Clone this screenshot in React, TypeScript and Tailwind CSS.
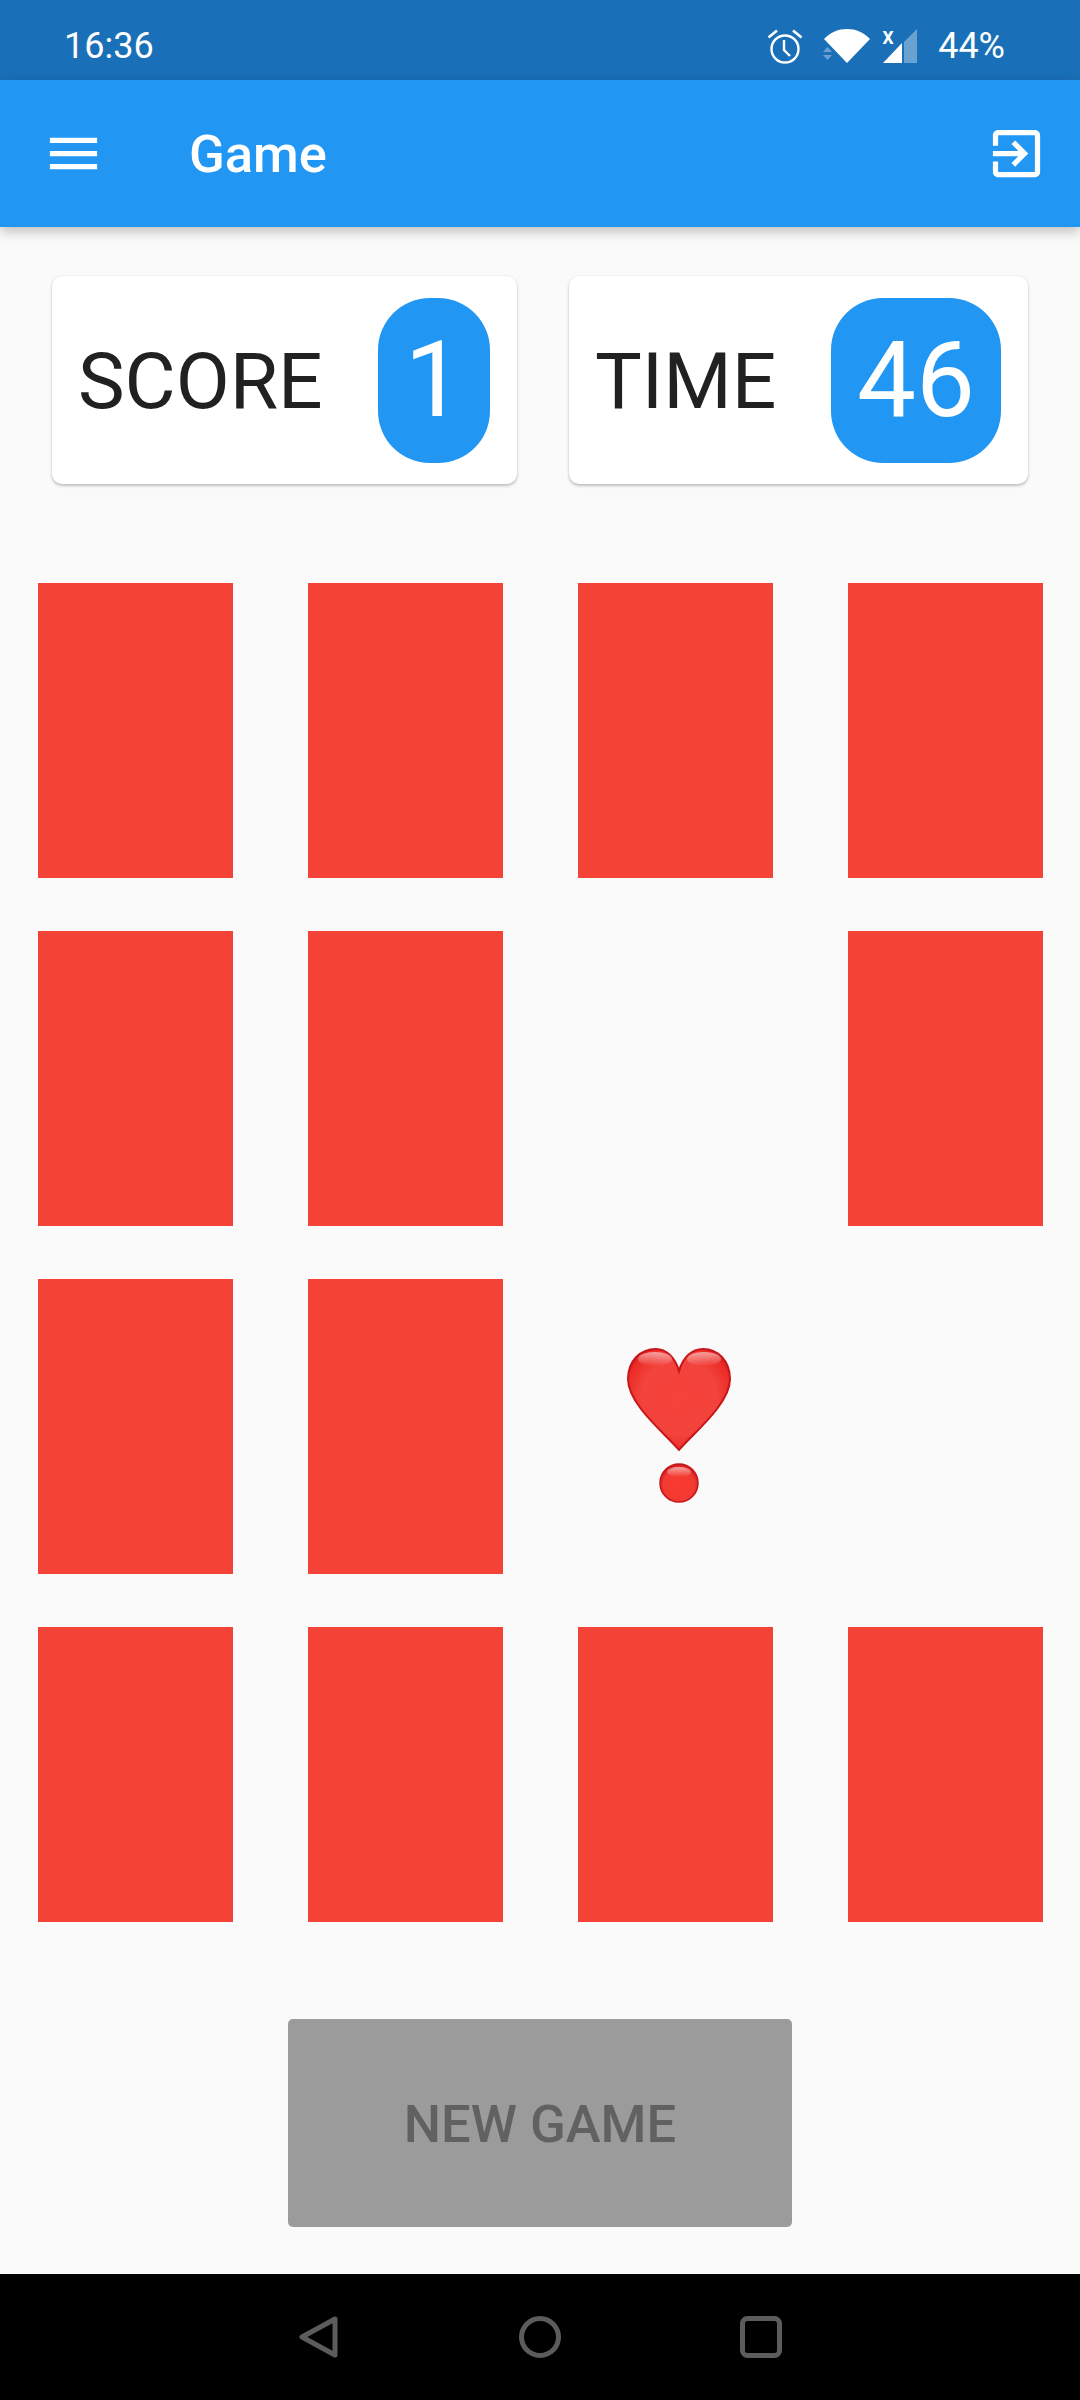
const ROBOTO = "font-['Roboto',sans-serif]";

// null = card already turned over
const cards: (string | null)[] = [
  "a", "b", "c", "d",
  "e", "f", null, "g",
  "h", "i", "heart", null,
  "j", "k", "l", "m",
];

function HeartEmoji() {
  return (
    <svg width="108" height="160" viewBox="0 0 108 160">
      <defs>
        <radialGradient id="heartFill" cx="50%" cy="48%" r="62%">
          <stop offset="0%" stopColor="#f6423a" />
          <stop offset="60%" stopColor="#f2433c" />
          <stop offset="85%" stopColor="#ec2c28" />
          <stop offset="100%" stopColor="#c9141a" />
        </radialGradient>
        <linearGradient id="heartShine" x1="0" y1="0" x2="0" y2="1">
          <stop offset="0%" stopColor="#ffffff" stopOpacity="0.55" />
          <stop offset="100%" stopColor="#ffffff" stopOpacity="0" />
        </linearGradient>
        <radialGradient id="dotFill" cx="50%" cy="55%" r="55%">
          <stop offset="0%" stopColor="#fb3a30" />
          <stop offset="75%" stopColor="#f03a32" />
          <stop offset="100%" stopColor="#c9181a" />
        </radialGradient>
      </defs>
      <path
        d="M54 103 C42 88 3 58 3 32 C3 14 15 2 31 2 C41 2 50 10 54 24 C58 10 67 2 78 2 C93 2 105 14 105 32 C105 58 66 88 54 103 Z"
        fill="url(#heartFill)"
        stroke="#c8151a"
        strokeWidth="2"
      />
      <ellipse cx="30" cy="12" rx="17" ry="7" fill="url(#heartShine)" />
      <ellipse cx="79" cy="12" rx="17" ry="7" fill="url(#heartShine)" />
      <circle cx="54" cy="136" r="19" fill="url(#dotFill)" stroke="#c8151a" strokeWidth="1.5" />
      <ellipse cx="54" cy="125" rx="12" ry="5" fill="url(#heartShine)" />
    </svg>
  );
}

function ScoreCard({
  label,
  value,
  cardWidth,
  pillWidth,
}: {
  label: string;
  value: string;
  cardWidth: string;
  pillWidth: string;
}) {
  return (
    <div
      className={`${cardWidth} h-[208px] flex items-center justify-between pl-[26px] pr-[27px] bg-white rounded-[10px] shadow-[0_2px_3px_rgba(0,0,0,0.22),0_0_2px_rgba(0,0,0,0.1)]`}
    >
      <span className="text-[78.5px] leading-none text-[#212121] pt-[2px]">{label}</span>
      <div
        className={`${pillWidth} h-[165px] flex items-center justify-center rounded-[52px] bg-[#2196f3] text-white text-[105px] leading-none`}
      >
        {value}
      </div>
    </div>
  );
}

export default function App() {
  return (
    <div className={`w-[1080px] h-[2400px] flex flex-col bg-[#fafafa] ${ROBOTO}`}>
      {/* Status bar */}
      <div className="h-[80px] flex items-center justify-between pt-[12px] pl-[64px] pr-[75px] bg-[#1a70b8] text-white text-[36px] leading-none">
        <span>16:36</span>
        <div className="flex items-center">
          <svg width="36" height="36" viewBox="0 0 36 36" fill="none" stroke="white" className="mr-[20px]">
            <circle cx="18" cy="21" r="13.5" strokeWidth="2.4" />
            <path d="M17 12v10l6 6" strokeWidth="2.4" />
            <path d="M1.5 9.5 10 2.5M34.5 9.5 26 2.5" strokeWidth="2.6" />
          </svg>
          <svg width="48" height="36" viewBox="0 0 48 36" fill="white" className="mr-[11px]">
            <path d="M24 35 1 11 C8 4 15 1 24 1 C33 1 40 4 47 11 Z" />
            <path d="M0 24 4.5 19 9 24Z M0 27 9 27 4.5 32Z" fill="#6f9fd2" />
          </svg>
          <div className="relative w-[36px] h-[36px] mr-[20px]">
            <svg width="36" height="36" viewBox="0 0 36 36">
              <path d="M35 1V35H22V14Z" fill="white" fillOpacity="0.35" />
              <path d="M1 35 20 15V35Z" fill="white" />
            </svg>
            <span className="absolute left-0 top-[-3px] text-[23px] font-medium leading-none">x</span>
          </div>
          <span>44%</span>
        </div>
      </div>

      {/* App bar */}
      <div className="relative h-[147px] flex items-center justify-between pl-[42px] pr-[32px] bg-[#2196f3] text-white shadow-[0_4px_12px_rgba(0,0,0,0.25)]">
        <div className="flex items-center">
          <svg width="63" height="63" viewBox="0 0 24 24" fill="white">
            <path d="M3 18h18v-2H3v2zm0-5h18v-2H3v2zm0-7v2h18V6H3z" />
          </svg>
          <span className="ml-[84px] pt-[2px] text-[52.5px] font-medium leading-none">Game</span>
        </div>
        <svg width="63" height="63" viewBox="0 0 24 24" fill="white">
          <path d="M10.09 15.59L11.5 17l5-5-5-5-1.41 1.41L12.67 11H3v2h9.67l-2.58 2.59zM19 3H5c-1.11 0-2 .9-2 2v4h2V5h14v14H5v-4H3v4c0 1.1.89 2 2 2h14c1.1 0 2-.9 2-2V5c0-1.1-.9-2-2-2z" />
        </svg>
      </div>

      {/* Score row */}
      <div className="flex gap-[52px] pl-[52px] mt-[49px]">
        <ScoreCard label="SCORE" value="1" cardWidth="w-[465px]" pillWidth="w-[112px]" />
        <ScoreCard label="TIME" value="46" cardWidth="w-[459px]" pillWidth="w-[170px]" />
      </div>

      {/* Cards */}
      <div className="grid grid-cols-[repeat(4,194.7px)] auto-rows-[295.3px] gap-x-[75.3px] gap-y-[52.7px] pl-[38px] mt-[99px]">
        {cards.map((card, i) => {
          if (card === null) return <div key={i} />;
          if (card === "heart")
            return (
              <div key={i} className="flex items-center justify-center pl-[7px]">
                <HeartEmoji />
              </div>
            );
          return <div key={i} className="bg-[#f44336]" />;
        })}
      </div>

      {/* New game */}
      <button className="self-center w-[504px] h-[208px] mt-[97px] pt-[2px] rounded-[5px] bg-[#9b9b9b] text-[#616161] text-[52.5px] font-medium leading-none">
        NEW GAME
      </button>

      {/* Nav bar */}
      <div className="mt-auto h-[126px] flex items-center justify-center gap-[179px] bg-black">
        <svg width="42" height="42" viewBox="0 0 42 42" fill="none" stroke="#5c5c5c" strokeWidth="5" strokeLinejoin="round">
          <path d="M37 3V39L4 21Z" />
        </svg>
        <svg width="42" height="42" viewBox="0 0 42 42" fill="none" stroke="#5c5c5c" strokeWidth="5">
          <circle cx="21" cy="21" r="18.5" />
        </svg>
        <svg width="42" height="42" viewBox="0 0 42 42" fill="none" stroke="#5c5c5c" strokeWidth="5">
          <rect x="2.5" y="2.5" width="37" height="37" rx="5" />
        </svg>
      </div>
    </div>
  );
}
